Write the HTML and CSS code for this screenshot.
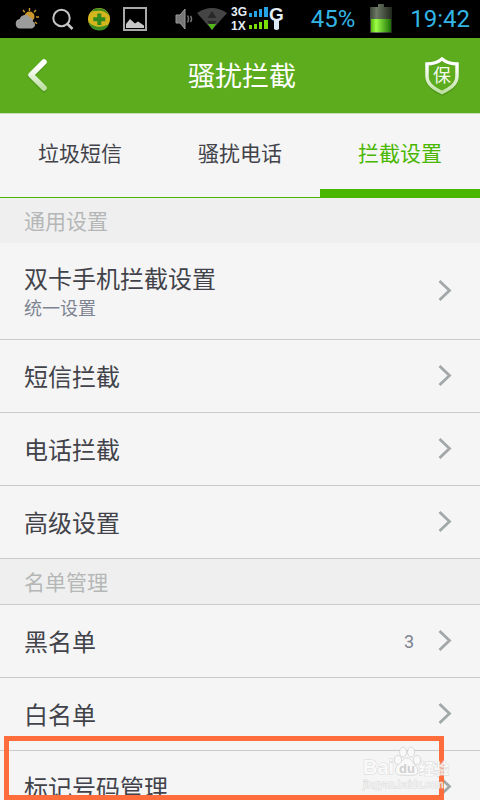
FILE: index.html
```html
<!DOCTYPE html>
<html lang="zh-CN">
<head>
<meta charset="utf-8">
<meta name="viewport" content="width=device-width, initial-scale=1">
<title>骚扰拦截</title>
<link rel="stylesheet" href="styles.css">
</head>
<body>
<svg width="0" height="0" class="defs" aria-hidden="true">
  <defs>
    <linearGradient id="fade" x1="0" y1="0" x2="0" y2="1"><stop offset="0.2" stop-color="#fff"/><stop offset="1" stop-color="#bfe0a4"/></linearGradient>
    <linearGradient id="cell" x1="0" x2="1"><stop offset="0" stop-color="#58b80c"/><stop offset="0.25" stop-color="#9cff48"/><stop offset="1" stop-color="#1d7005"/></linearGradient>
    <linearGradient id="shell" x1="0" x2="1"><stop offset="0" stop-color="#3c4438"/><stop offset="0.3" stop-color="#6c7964"/><stop offset="1" stop-color="#20261c"/></linearGradient>
    <symbol id="chevron" viewBox="0 0 14 22"><path d="M1.500 1L11.500 10.500L1.500 20" fill="none" stroke="#a2a8a9" stroke-width="2.800"/></symbol>
  </defs>
</svg>
<div class="screen">
  <div class="status">
    <div class="notices">
      <svg width="24" height="24" viewBox="0 0 24 24"><g stroke="#c8962a" stroke-width="1.400"><path d="M14.500 1v3M8 3l1.700 2.200M21 3l-2 2.200M21 10h3M20 15l2 1.800"/></g><circle cx="14.500" cy="9.500" r="5" fill="#c8962a"/><path d="M5 21.500a4.800 4.800 0 0 1-.3-9.500 5.700 5.700 0 0 1 10.300-1.500 4.300 4.300 0 0 1 3 4 3.700 3.700 0 0 1-1 7z" fill="#9b9b9b"/></svg>
      <svg width="24" height="24" viewBox="0 0 24 24" fill="none" stroke="#c4c4c4"><circle cx="10.500" cy="11" r="8.200" stroke-width="2"/><path d="M16 16.500l5.500 5.500" stroke-width="2.600"/></svg>
      <svg width="24" height="24" viewBox="0 0 24 24"><circle cx="12" cy="12" r="11" fill="#d5b51c"/><path d="M3 6A11 11 0 0 1 22.500 9C17 2 11 4 8 4 5 4 3 6 3 6zM1.500 15A11 11 0 0 0 22 17.500C17 19 13 21 8 19 4 18 3 16 1.500 15z" fill="#3d8d20"/><path d="M10.300 6.500h4v3.800h4v4h-4v3.700h-4v-3.700h-4v-4h4z" fill="#318a1e"/></svg>
      <svg width="24" height="24" viewBox="0 0 24 24"><path d="M1 1h22v22H1z" fill="none" stroke="#a9a9a9" stroke-width="2"/><path d="M3 21v-4l4-5 5 4.500 3-2 6 4v2.500z" fill="#c8c8c8"/></svg>
    </div>
    <div class="signals">
      <svg width="18" height="24" viewBox="0 0 18 24"><path d="M1 8h4l5-6v20l-5-6H1z" fill="#777" stroke="#999"/><path d="M12.500 8.500q2 3.500 0 7M15.500 9q2 3 0 6" fill="none" stroke="#777" stroke-width="1.500"/></svg>
      <svg width="30" height="24" viewBox="0 0 30 24"><path d="M0 6Q15-4 30 6L15 23z" fill="#454545"/><path d="M15 4l4.500 7h-9z" fill="#292929"/><path d="M11 17h8l-4 6z" fill="#53b91a"/><path d="M10.500 14h9l-2 3h-5z" fill="#272727"/></svg>
      <svg width="54" height="28" viewBox="0 0 54 28" class="radio"><text x="0" y="11">3G</text><text x="0" y="25">1X</text><path d="M18 8h3v4h-3zM23 6h3v6h-3zM28 4h3v8h-3zM33 2h4v10h-4z" fill="#27a2e4"/><path d="M18 20h3v4h-3zM23 19h3v5h-3zM28 17h3v7h-3zM33 15h4v9h-4z" fill="#79df08"/><path d="M43 14h5v10q-2.500 2-5 0z" fill="#dce8f5"/><text x="38" y="16" class="roam">G</text></svg>
    </div>
    <span class="percent">45%</span>
    <svg width="22" height="30" viewBox="0 0 22 30" class="battery"><path d="M8 0h6v3h8v26H0V3h8z" fill="url(#shell)"/><path d="M1 15h20v13H1z" fill="url(#cell)"/></svg>
    <time>19:42</time>
  </div>

  <header class="bar">
    <button type="button" aria-label="返回"><svg width="24" height="38" viewBox="0 0 24 38"><path d="M20 5.500L7 18.500L20 31.500" transform="translate(0 1)" fill="none" stroke="#4d9618" stroke-width="5.500" stroke-linecap="round"/><path d="M20 5L7 18L20 31" fill="none" stroke="url(#fade)" stroke-width="5.500" stroke-linecap="round" stroke-linejoin="round"/></svg></button>
    <h1>骚扰拦截</h1>
    <button type="button" aria-label="保护"><svg width="36" height="40" viewBox="0 0 36 40" class="shield"><path d="M18 3.500C13 7.500 8 8.500 3 8.500V21c0 9 8 14 15 17C25 35 33 30 33 21V8.500C28 8.500 23 7.500 18 3.500z" fill="none" stroke="#4d9618" stroke-width="3.500"/><path d="M18 3C13 7 8 8 3 8V20c0 9 8 13 15 16.500C25 33 33 29 33 20V8C28 8 23 7 18 3z" fill="none" stroke="url(#fade)" stroke-width="3.500"/><text x="18" y="26" text-anchor="middle">保</text></svg></button>
  </header>

  <nav class="tabs">
    <a href="#sms">垃圾短信</a>
    <a href="#calls">骚扰电话</a>
    <a href="#settings" class="active" aria-current="page">拦截设置</a>
  </nav>

  <main id="settings">
    <h2>通用设置</h2>
    <ul>
      <li><a href="#dual" class="tall"><span class="label">双卡手机拦截设置<small>统一设置</small></span><svg width="14" height="22"><use href="#chevron"/></svg></a></li>
      <li><a href="#sms-block"><span class="label">短信拦截</span><svg width="14" height="22"><use href="#chevron"/></svg></a></li>
      <li><a href="#call-block"><span class="label">电话拦截</span><svg width="14" height="22"><use href="#chevron"/></svg></a></li>
      <li><a href="#advanced"><span class="label">高级设置</span><svg width="14" height="22"><use href="#chevron"/></svg></a></li>
    </ul>
    <h2 class="ruled">名单管理</h2>
    <ul>
      <li><a href="#black"><span class="label">黑名单</span><span class="count">3</span><svg width="14" height="22"><use href="#chevron"/></svg></a></li>
      <li><a href="#white"><span class="label">白名单</span><svg width="14" height="22"><use href="#chevron"/></svg></a></li>
      <li><a href="#marked"><span class="label">标记号码管理</span><svg width="14" height="22"><use href="#chevron"/></svg></a></li>
    </ul>
  </main>

  <div class="highlight"></div>
  <svg class="watermark" width="92" height="46" viewBox="0 0 92 46">
    <g fill="#fafafa" stroke="#d6d6d6">
      <text x="2" y="28" class="brand">Bai</text>
      <ellipse cx="37" cy="14" rx="3.500" ry="4.500"/><ellipse cx="42" cy="6" rx="3.500" ry="5"/><ellipse cx="50" cy="6" rx="3.500" ry="5"/><ellipse cx="56" cy="14" rx="3.500" ry="4.500"/>
      <path d="M46 12c4 0 5 4 8 7 4 3 4 10-1 10-4 1-9 0-14 0-5 0-6-7-2-10 4-3 5-7 9-7z"/>
      <text x="58" y="28" class="cn">经验</text>
      <text x="2" y="42" class="site">jingyan.baidu.com</text>
    </g>
    <text x="38" y="27" class="du">du</text>
  </svg>
</div>
</body>
</html>
```
FILE: styles.css
```css
* { box-sizing: border-box; }

body {
  margin: 0;
  background: #f5f5f5;
  color: #42434a;
  font-family: Roboto, "Noto Sans CJK SC", sans-serif;
}

svg { display: block; flex: none; }
.defs { position: absolute; }
a { color: inherit; text-decoration: none; }
ul { list-style: none; margin: 0; padding: 0; }

.screen {
  position: relative;
  display: flex;
  flex-direction: column;
  height: 100vh;
  overflow: hidden;
}

.status {
  display: flex;
  align-items: center;
  flex: none;
  height: 38px;
  padding: 0 10px 0 15px;
  background: #000;
  color: #33b5e5;
  font-size: 24px;
  line-height: 38px;
}
.notices { display: flex; gap: 12px; }
.signals { display: flex; align-items: center; gap: 4px; margin-left: auto; }
.percent { margin-left: 26px; }
.battery { margin: 0 18px 0 15px; }
.radio text { fill: #e4edf6; font: bold 12px "Liberation Sans", sans-serif; }
.radio .roam { font-size: 19px; }

.bar {
  display: flex;
  align-items: center;
  justify-content: space-between;
  flex: none;
  height: 76px;
  padding: 0 20px 0 24px;
  background: #5cac1e;
  border-bottom: 1px solid #cbdcbd;
}
.bar button { display: flex; width: 36px; padding: 0; border: 0; background: none; }
.bar h1 { margin: 0; padding-top: 2px; color: #fff; font-size: 27px; font-weight: 400; line-height: 40px; }
.shield text { fill: #f5faf0; font: 400 18px "Noto Sans CJK SC", sans-serif; }

.tabs {
  display: grid;
  grid-template-columns: repeat(3, 1fr);
  flex: none;
  height: 84px;
  font-size: 21px;
  line-height: 32px;
  text-align: center;
}
.tabs a { padding-top: 24px; border-bottom: 1px solid #49b700; }
.tabs .active { color: #49b700; border-bottom-width: 9px; }

main { flex: 1; min-height: 0; overflow-y: auto; scrollbar-width: none; }
h2 {
  height: 45px;
  margin: 0;
  padding: 8px 0 0 24px;
  background: #efefef;
  color: #b5b7b7;
  font-size: 21px;
  font-weight: 400;
  line-height: 32px;
}
.ruled { height: 46px; border-bottom: 1px solid #cbcbcb; }

li a {
  display: flex;
  align-items: center;
  height: 73px;
  padding: 0 28px 0 24px;
  border-bottom: 1px solid #cbcbcb;
}
li .tall { height: 97px; }
.label { flex: 1; padding-top: 4px; font-size: 24px; line-height: 32px; }
.label small { display: block; color: #7c8391; font-size: 18px; line-height: 26px; }
.count { margin-right: 24px; color: #7c8391; font-size: 18px; }

.highlight {
  position: absolute;
  right: 36px;
  bottom: 0;
  left: 4px;
  height: 64px;
  border: 5px solid #ff6d3d;
}
.watermark { position: absolute; right: 27px; bottom: 8px; opacity: 0.85; }
.watermark text { paint-order: stroke; }
.brand { font: bold 20px "Liberation Sans", sans-serif; }
.cn { font: bold 15px "Noto Sans CJK SC", sans-serif; }
.site { font: 10px "Liberation Sans", sans-serif; }
.du { fill: #c9c9c9; font: bold 13px "Liberation Sans", sans-serif; }
```
